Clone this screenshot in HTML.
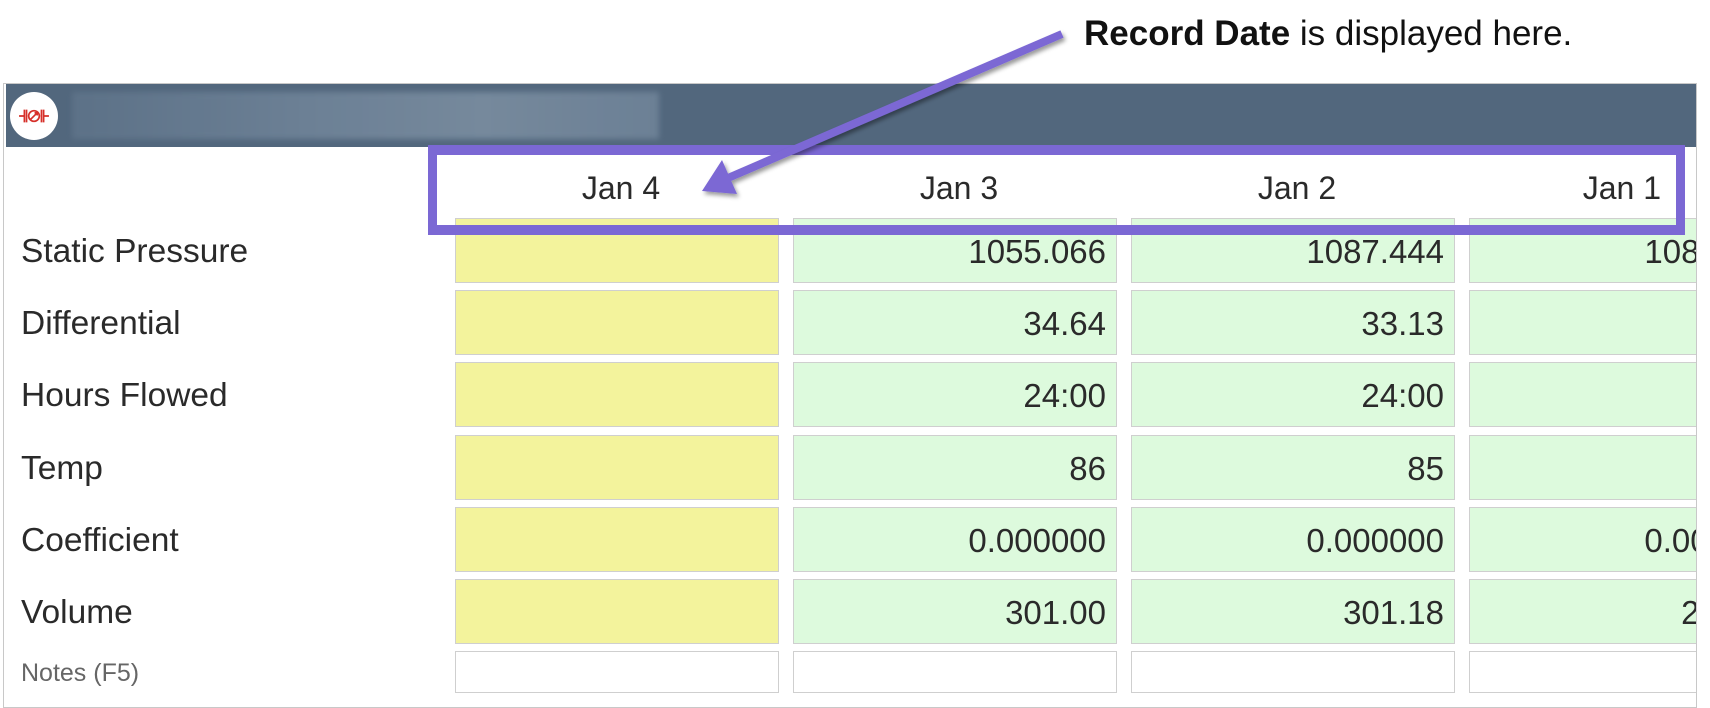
<!DOCTYPE html>
<html><head><meta charset="utf-8"><style>
html,body{margin:0;padding:0;width:1710px;height:708px;background:#fff;overflow:hidden;font-family:"Liberation Sans",sans-serif;}
.abs{position:absolute;}
#panel{position:absolute;left:3px;top:83px;width:1692px;height:623px;border:1px solid #c8c8c8;overflow:hidden;background:#fff;}
#hdr{position:absolute;left:2px;top:0;width:1690px;height:63px;background:#52677d;}
.cell{position:absolute;width:322px;height:63px;border:1px solid #cfcfcf;box-sizing:content-box;font-size:33px;color:#2a2a2a;text-align:right;line-height:66px;}
.cell span{padding-right:10px;}
.y{background:#f3f39c;}
.g{background:#ddfadd;}
.n{background:#fff;height:40px;}
.lbl{position:absolute;left:17px;font-size:33.5px;color:#2a2a2a;line-height:68px;}
.date{position:absolute;top:86px;font-size:32px;color:#2a2a2a;width:324px;text-align:center;}
</style></head><body>
<div class="abs" style="left:1084px;top:14px;font-size:35px;color:#111;white-space:nowrap;"><b>Record Date</b> is displayed here.</div>
<div id="panel">
 <div id="hdr">
  <div class="abs" style="left:4px;top:8px;width:48px;height:48px;border-radius:50%;background:#fff;"></div>
  <svg class="abs" style="left:12px;top:21px" width="32" height="22" viewBox="0 0 30 20" stroke="#d6302a" stroke-width="1.6" fill="none">
   <path d="M1 10H6M6 4V16M8 4V16M22 4V16M24 4V16M24 10H29"/><circle cx="15" cy="10" r="5"/><path d="M12 13L18 7M15.5 7H18V9.5"/>
  </svg>
  <div class="abs" style="left:66px;top:8px;width:587px;height:47px;background:linear-gradient(90deg,#5e7389,#6f8398 40%,#7a8da0 70%,#6f8398);filter:blur(3px);opacity:.9"></div>
 </div>
 <div class="date" style="left:455px">Jan 4</div>
 <div class="date" style="left:793px">Jan 3</div>
 <div class="date" style="left:1131px">Jan 2</div>
 <div class="date" style="left:1333px;text-align:right">Jan 1</div>

 <div class="lbl" style="top:134px">Static Pressure</div>
 <div class="lbl" style="top:206px">Differential</div>
 <div class="lbl" style="top:278px">Hours Flowed</div>
 <div class="lbl" style="top:351px">Temp</div>
 <div class="lbl" style="top:423px">Coefficient</div>
 <div class="lbl" style="top:495px">Volume</div>
 <div class="lbl" style="top:568px;font-size:25px;color:#666;line-height:42px">Notes (F5)</div>

 <div class="cell y" style="left:451px;top:134px"></div>
 <div class="cell y" style="left:451px;top:206px"></div>
 <div class="cell y" style="left:451px;top:278px"></div>
 <div class="cell y" style="left:451px;top:351px"></div>
 <div class="cell y" style="left:451px;top:423px"></div>
 <div class="cell y" style="left:451px;top:495px"></div>
 <div class="cell n" style="left:451px;top:567px"></div>

 <div class="cell g" style="left:789px;top:134px"><span>1055.066</span></div>
 <div class="cell g" style="left:789px;top:206px"><span>34.64</span></div>
 <div class="cell g" style="left:789px;top:278px"><span>24:00</span></div>
 <div class="cell g" style="left:789px;top:351px"><span>86</span></div>
 <div class="cell g" style="left:789px;top:423px"><span>0.000000</span></div>
 <div class="cell g" style="left:789px;top:495px"><span>301.00</span></div>
 <div class="cell n" style="left:789px;top:567px"></div>

 <div class="cell g" style="left:1127px;top:134px"><span>1087.444</span></div>
 <div class="cell g" style="left:1127px;top:206px"><span>33.13</span></div>
 <div class="cell g" style="left:1127px;top:278px"><span>24:00</span></div>
 <div class="cell g" style="left:1127px;top:351px"><span>85</span></div>
 <div class="cell g" style="left:1127px;top:423px"><span>0.000000</span></div>
 <div class="cell g" style="left:1127px;top:495px"><span>301.18</span></div>
 <div class="cell n" style="left:1127px;top:567px"></div>

 <div class="cell g" style="left:1465px;top:134px"><span>1087.444</span></div>
 <div class="cell g" style="left:1465px;top:206px"><span>33.10</span></div>
 <div class="cell g" style="left:1465px;top:278px"><span>24:00</span></div>
 <div class="cell g" style="left:1465px;top:351px"><span>85</span></div>
 <div class="cell g" style="left:1465px;top:423px"><span>0.000000</span></div>
 <div class="cell g" style="left:1465px;top:495px"><span>290.00</span></div>
 <div class="cell n" style="left:1465px;top:567px"></div>
</div>
<div class="abs" style="left:428px;top:145px;width:1239px;height:70px;border:9px solid #7b68d4;border-top-width:10px;border-bottom-width:10px;"></div>
<svg class="abs" style="left:0;top:0" width="1710" height="708">
 <defs><filter id="sh" x="-20%" y="-20%" width="140%" height="140%"><feDropShadow dx="2" dy="3" stdDeviation="2" flood-color="#000" flood-opacity="0.4"/></filter></defs>
 <g filter="url(#sh)">
  <line x1="1062" y1="34" x2="728" y2="178" stroke="#7b68d4" stroke-width="8"/>
  <polygon points="702,191 722,160 737,194" fill="#7b68d4"/>
 </g>
</svg>
</body></html>
